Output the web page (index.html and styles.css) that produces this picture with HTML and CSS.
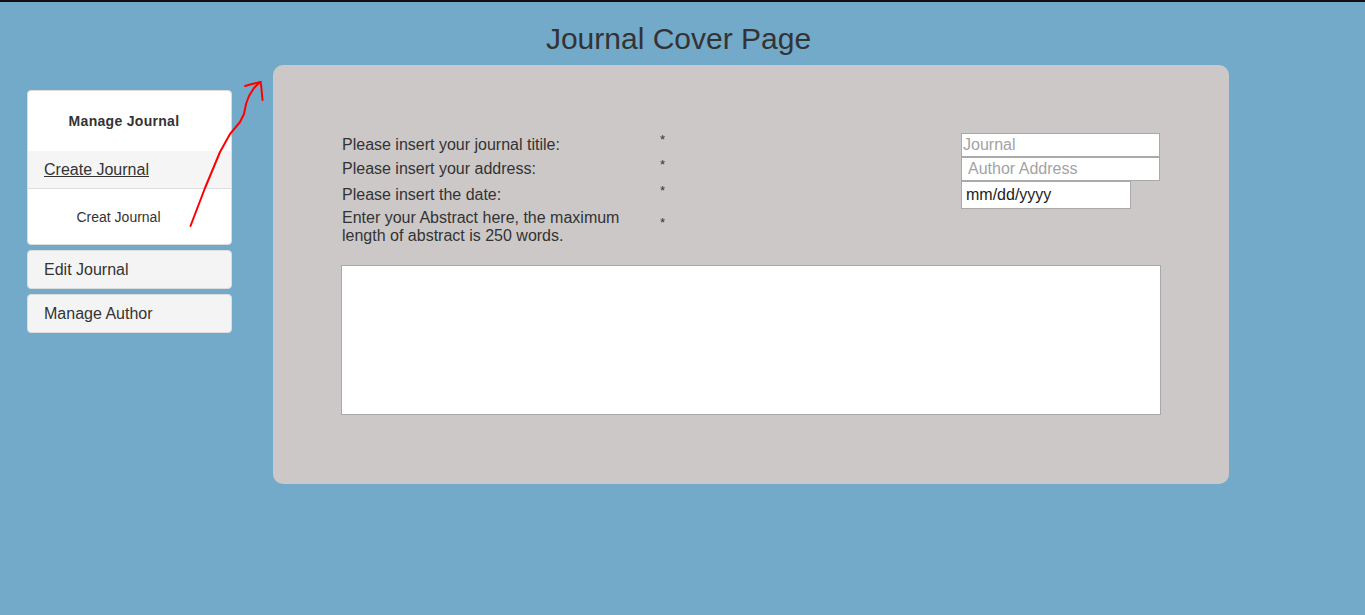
FILE: index.html
```html
<!DOCTYPE html>
<html>
<head>
<meta charset="utf-8">
<title>Journal Cover Page</title>
<link rel="stylesheet" href="styles.css">
</head>
<body>
<h1 class="page-title">Journal Cover Page</h1>
<div class="layout">
  <aside class="sidebar">
    <div class="panel">
      <div class="panel-title">Manage Journal</div>
      <div class="panel-link"><a href="#">Create Journal</a></div>
      <div class="panel-body">Creat Journal</div>
    </div>
    <div class="panel panel-simple">Edit Journal</div>
    <div class="panel panel-simple panel-last">Manage Author</div>
  </aside>
  <main class="card">
    <div class="form-grid">
      <label class="lbl r1">Please insert your journal titile:</label>
      <span class="star s1">*</span>
      <input class="field field-title" type="text" placeholder="Journal">

      <label class="lbl r2">Please insert your address:</label>
      <span class="star s2">*</span>
      <input class="field field-addr" type="text" placeholder="Author Address">

      <label class="lbl r3">Please insert the date:</label>
      <span class="star s3">*</span>
      <div class="field field-date">mm/dd/yyyy</div>

      <label class="lbl lbl-abstract">Enter your Abstract here, the maximum length of abstract is 250 words.</label>
      <span class="star s4">*</span>
      <span></span>
    </div>
    <textarea class="abstract"></textarea>
  </main>
</div>
<svg class="annotation" width="1365" height="615" viewBox="0 0 1365 615">
  <path d="M190.5 226 L205 188 L220 152 L230 134 L240 122 L244 114 L246 104 L249 96 L254 88 L260 82" fill="none" stroke="#ff0000" stroke-width="2" stroke-linecap="round" stroke-linejoin="round"/>
  <path d="M245 86 L252 84 L261 82" fill="none" stroke="#ff0000" stroke-width="2" stroke-linecap="round"/>
  <path d="M261 84 L262.5 100" fill="none" stroke="#ff0000" stroke-width="2" stroke-linecap="round"/>
</svg>
</body>
</html>
```
FILE: styles.css
```css
html, body {
  margin: 0;
  padding: 0;
}
body {
  background: #74aac9;
  border-top: 2px solid #111;
  font-family: "Liberation Sans", Arial, sans-serif;
  color: #333;
  min-height: 613px;
  position: relative;
}
.page-title {
  margin: 20px 0 9px;
  padding-right: 8px;
  font-size: 30px;
  line-height: 34px;
  font-weight: normal;
  text-align: center;
  color: #333;
}
.layout {
  display: flex;
  align-items: flex-start;
  padding-left: 27px;
}
.sidebar {
  width: 205px;
  margin-top: 25px;
  display: flex;
  flex-direction: column;
}
.panel {
  border: 1px solid #dcdcdc;
  border-radius: 4px;
  background: #fff;
  overflow: hidden;
  margin-bottom: 5px;
}
.panel-title {
  height: 60px;
  display: flex;
  align-items: center;
  justify-content: center;
  padding-right: 11px;
  font-size: 14px;
  font-weight: bold;
  letter-spacing: 0.3px;
  color: #333;
}
.panel-link {
  height: 37px;
  display: flex;
  align-items: center;
  padding-left: 16px;
  background: #f5f5f5;
  border-bottom: 1px solid #dddddd;
  font-size: 16px;
}
.panel-link a {
  color: #333;
  text-decoration: underline;
}
.panel-body {
  height: 55px;
  display: flex;
  align-items: center;
  justify-content: center;
  padding-right: 22px;
  font-size: 14px;
  color: #333;
}
.panel-simple {
  height: 37px;
  display: flex;
  align-items: center;
  padding-left: 16px;
  background: #f4f4f4;
  font-size: 16px;
  color: #333;
}
.card {
  margin-left: 41px;
  width: 956px;
  height: 419px;
  box-sizing: border-box;
  padding: 68px;
  background: #ccc8c8;
  border-radius: 10px;
}
.form-grid {
  display: grid;
  grid-template-columns: 319px 301px 200px;
  grid-template-rows: 24px 24px 28px 36px;
  align-items: center;
}
.lbl {
  font-size: 16px;
  line-height: 18px;
  color: #333;
  padding-left: 1px;
}
.lbl-abstract {
  align-self: start;
  line-height: 17.5px;
  padding-right: 10px;
}
.star {
  align-self: start;
  font-size: 13px;
  line-height: 13px;
  color: #333;
}
.s1 { padding-top: 0px; }
.s2 { padding-top: 1px; }
.s3 { padding-top: 3px; }
.s4 { padding-top: 7px; }
.field {
  box-sizing: border-box;
  border: 1px solid #a9a9a9;
  background: #fff;
  margin: 0;
  font-family: "Liberation Sans", Arial, sans-serif;
  font-size: 16px;
  color: #222;
  outline: none;
}
.field::placeholder {
  color: #a3a3a3;
}
.field-title {
  width: 199px;
  height: 24px;
  padding: 0 0 0 1px;
}
.field-addr {
  width: 199px;
  height: 24px;
  padding: 0 0 0 6px;
}
.field-date {
  width: 170px;
  height: 28px;
  padding: 0 0 0 4px;
  display: flex;
  align-items: center;
}
.abstract {
  display: block;
  box-sizing: border-box;
  width: 820px;
  height: 150px;
  margin: 20px 0 0;
  border: 1px solid #a9a9a9;
  background: #fff;
  resize: none;
  outline: none;
}
.annotation {
  position: absolute;
  left: 0;
  top: -2px;
  pointer-events: none;
}
```
